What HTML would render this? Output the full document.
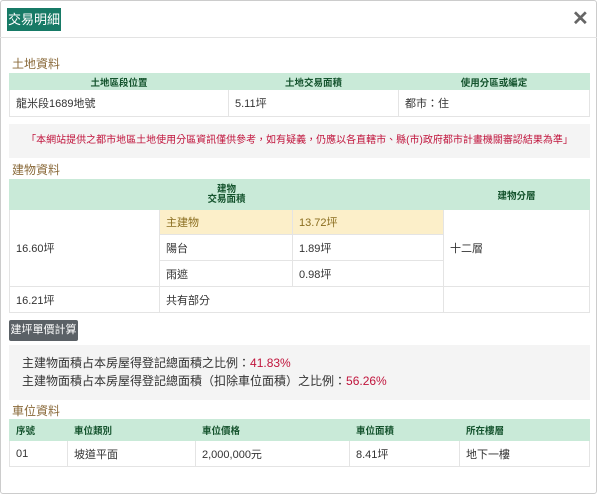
<!DOCTYPE html>
<html><head><meta charset="utf-8"><style>
*{box-sizing:border-box;margin:0;padding:0}
body{width:600px;height:497px;background:#fff;font-family:"Liberation Sans","Noto Sans CJK TC",sans-serif;font-size:12px;color:#333;position:relative;overflow:hidden}
.frame{position:absolute;left:0;top:0;width:597px;height:494px;border:1px solid #ccc;border-radius:3px}
.hdr{position:absolute;left:0;top:37px;width:597px;border-top:1px solid #e3e3e3}
.badge{position:absolute;left:7px;top:8px;width:54px;height:23px;background:#177a66;color:#fff;font-size:13px;line-height:23px;text-align:center}
.x{position:absolute;left:572px;top:6px;font-size:20px;color:#666;font-weight:bold}
.sec{position:absolute;left:12px;color:#8a6a3a;font-size:12px}
table{position:absolute;left:9px;width:581px;border-collapse:collapse;table-layout:fixed}
td,th{border:1px solid #e4e4e4;font-size:11px;padding:0 6px;text-align:left;font-weight:normal}
th{background:#c9ead8;color:#14532d;font-weight:bold;font-size:9.5px;text-align:center;border-color:#c9ead8}
.box{position:absolute;left:9px;width:581px;background:#f4f4f4}
.red{color:#c0143c}
</style></head><body>
<div class="frame"></div><div class="hdr"></div>
<div class="badge">交易明細</div>
<div class="x">✕</div>
<div class="sec" style="top:55px">土地資料</div>
<table style="top:73px">
<col style="width:219px"><col style="width:170px"><col>
<tr style="height:16px"><th>土地區段位置</th><th>土地交易面積</th><th>使用分區或編定</th></tr>
<tr style="height:27px"><td>龍米段1689地號</td><td>5.11坪</td><td>都市：住</td></tr>
</table>
<div class="box" style="top:124px;height:34px;text-align:center;line-height:34px;font-size:10px" ><span class="red">「本網站提供之都市地區土地使用分區資訊僅供參考，如有疑義，仍應以各直轄市、縣(市)政府都市計畫機關審認結果為準」</span></div>
<div class="sec" style="top:161px">建物資料</div>
<table style="top:179px">
<col style="width:150px"><col style="width:133px"><col style="width:151px"><col>
<tr style="height:30px"><th colspan="3" style="line-height:10px">建物<br>交易面積</th><th>建物分層</th></tr>
<tr style="height:25px"><td rowspan="3">16.60坪</td><td style="background:#fcefc9;color:#8a6d1f">主建物</td><td style="background:#fcefc9;color:#8a6d1f">13.72坪</td><td rowspan="3">十二層</td></tr>
<tr style="height:26px"><td>陽台</td><td>1.89坪</td></tr>
<tr style="height:26px"><td>雨遮</td><td>0.98坪</td></tr>
<tr style="height:26px"><td>16.21坪</td><td colspan="2">共有部分</td><td></td></tr>
</table>
<div style="position:absolute;left:9px;top:320px;width:69px;height:21px;background:#5b6166;color:#fff;font-size:11px;line-height:21px;text-align:center;border-radius:2px">建坪單價計算</div>
<div class="box" style="top:345px;height:55px;padding:9px 0 0 13px;font-size:12px;line-height:18px">主建物面積占本房屋得登記總面積之比例：<span class="red">41.83%</span><br>主建物面積占本房屋得登記總面積（扣除車位面積）之比例：<span class="red">56.26%</span></div>
<div class="sec" style="top:402px">車位資料</div>
<table style="top:419px">
<col style="width:58px"><col style="width:128px"><col style="width:154px"><col style="width:110px"><col>
<tr style="height:21px"><th style="text-align:left">序號</th><th style="text-align:left">車位類別</th><th style="text-align:left">車位價格</th><th style="text-align:left">車位面積</th><th style="text-align:left">所在樓層</th></tr>
<tr style="height:26px"><td>01</td><td>坡道平面</td><td>2,000,000元</td><td>8.41坪</td><td>地下一樓</td></tr>
</table>
</body></html>
